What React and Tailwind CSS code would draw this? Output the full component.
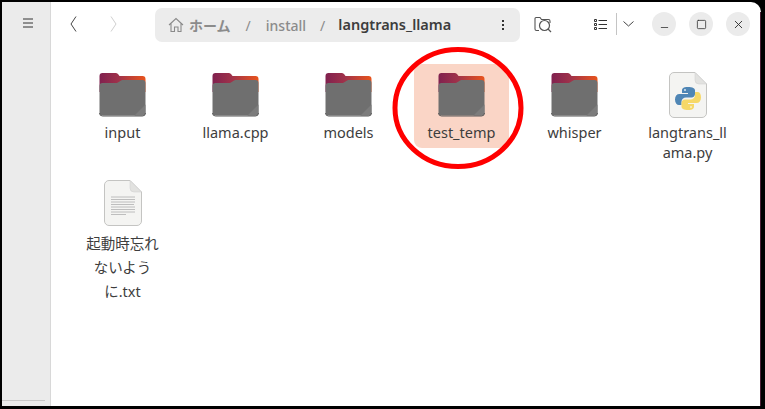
import React from 'react';
import { X, Minus, Square } from 'lucide-react';

const FONT = "font-['Noto_Sans','Noto_Sans_CJK_JP',sans-serif]";

const FolderIcon = ({ id }) => (
  <svg width="47" height="44" viewBox="2 0 46 44" className="block">
    <defs>
      <linearGradient id={`tab-${id}`} x1="0" y1="0" x2="1" y2="0">
        <stop offset="0" stopColor="#80214f" />
        <stop offset="0.42" stopColor="#a0324a" />
        <stop offset="1" stopColor="#e9541c" />
      </linearGradient>
    </defs>
    <path d="M2 3a3 3 0 0 1 3-3h13a3.500 3.500 0 0 1 2.500 1L22 3h23a3 3 0 0 1 3 3v13H2z" fill={`url(#tab-${id})`} />
    <path d="M2 13a3 3 0 0 1 3-3h13c2 0 3-.6 4-1.500S24 7 26 7h19a3 3 0 0 1 3 3v29.500a3 3 0 0 1-3 3H5a3 3 0 0 1-3-3z" fill="#6f6f6f" />
    <path d="M37 42.500l11-11v8a3 3 0 0 1-3 3z" fill="#7c7c7c" />
    <path d="M2 40a3 3 0 0 0 3 3h40a3 3 0 0 0 3-3" fill="none" stroke="#5a5a5a" strokeWidth="1" />
  </svg>
);

const PageBase = ({ children }) => (
  <svg width="38" height="46" viewBox="0 0 38 46" className="block">
    <path d="M5 .5h21L37.500 12v29a4.500 4.500 0 0 1-4.500 4.500H5A4.500 4.500 0 0 1 .5 41V5A4.500 4.500 0 0 1 5 .5z" fill="#f4f4f2" stroke="#c4c4c2" />
    <path d="M26 .5V8a4 4 0 0 0 4 4h7.500z" fill="#e2e2e0" stroke="#cfcfcd" strokeWidth="0.500" />
    {children}
  </svg>
);

const PythonIcon = () => (
  <PageBase>
    <path d="M18.500 15c-4 0-5.500 1.200-5.500 3.500V21h6v1h-8.500c-2.800 0-4.500 2-4.500 5.500s1.700 5.500 4 5.500h2.500v-3.300c0-2.500 2-4.200 4.500-4.200h5.500c2 0 3.500-1.600 3.500-3.500v-3.500c0-2-2-3.500-7.500-3.500z" fill="#4f86b5" />
    <circle cx="16" cy="18" r="0.900" fill="#e9f0f6" />
    <path d="M19.500 38c4 0 5.500-1.200 5.500-3.500V32h-6v-1h8.500c2.800 0 4.500-2 4.500-5.500S30.800 20 28.500 20H26v3.300c0 2.500-2 4.200-4.500 4.200H16c-2 0-3.500 1.600-3.500 3.500v3.500c0 2 2 3.500 7 3.500z" fill="#f6d868" />
    <circle cx="22" cy="35" r="0.900" fill="#fbf3cf" />
  </PageBase>
);

const TextIcon = () => (
  <PageBase>
    {[17, 19.5, 22, 24.5, 27, 29.5, 32, 34.5].map((y, i) => (
      <line key={y} x1="7" x2={i === 7 ? 22 : i === 3 ? 30 : 31} y1={y} y2={y} stroke="#b0b0b0" strokeWidth="0.800" />
    ))}
  </PageBase>
);

const items = [
  { name: 'input', type: 'folder' },
  { name: 'llama.cpp', type: 'folder' },
  { name: 'models', type: 'folder' },
  { name: 'test_temp', type: 'folder', selected: true },
  { name: 'whisper', type: 'folder' },
  { name: ['langtrans_ll', 'ama.py'], type: 'python' },
  { name: ['起動時忘れ', 'ないよう', 'に.txt'], type: 'text' },
];

const FileItem = ({ item, id }) => (
  <div className="flex justify-center">
    <div className={`w-[95px] rounded-[8px] flex flex-col items-center pt-[9px] pb-[6px] ${item.selected ? 'bg-[#fad5c6]' : ''}`}>
      <div className="h-[44px] flex items-center justify-center">
        {item.type === 'folder' && <FolderIcon id={id} />}
        {item.type === 'python' && <PythonIcon />}
        {item.type === 'text' && <TextIcon />}
      </div>
      <div className={`text-center text-[14.5px] leading-[20px] text-[#3d3d3d] ${item.type === 'text' ? 'mt-[6px]' : 'mt-[5px]'}`}>
        {[].concat(item.name).map((line) => (
          <div key={line} className={item.type === 'text' ? 'leading-[24px]' : ''}>{line}</div>
        ))}
      </div>
    </div>
  </div>
);

const WindowButton = ({ children }) => (
  <div className="w-[24px] h-[24px] rounded-full bg-[#ebebeb] flex items-center justify-center text-[#2e2e2e]">
    {children}
  </div>
);

export default function App() {
  return (
    <div className={`w-[765px] h-[409px] bg-black pt-[2px] pl-[2px] pr-[4px] pb-[3px] overflow-hidden ${FONT}`}>
      <div className="relative w-full h-full flex bg-white rounded-tr-[10px] overflow-hidden">
        {/* sidebar */}
        <aside className="w-[49px] shrink-0 bg-[#ebebeb] border-r border-[#d8d8d8] flex flex-col justify-between">
          <div className="pt-[15px] pl-[4px] flex justify-center">
            <svg width="12" height="12" viewBox="0 0 12 12" className="block">
              <path d="M1 2h10M1 6h10M1 10h10" stroke="#333" strokeWidth="1" fill="none" />
            </svg>
          </div>
          <div className="h-px bg-[#c8c8c8] mb-[5px] mr-[5px]" />
        </aside>

        <main className="flex-1 min-w-0">
          {/* header */}
          <header className="h-[44px] flex items-center">
            <svg width="10" height="18" viewBox="0 0 10 18" className="ml-[17px] block">
              <path d="M8 1.500L3 9l5 7.500" stroke="#444" strokeWidth="1" fill="none" />
            </svg>
            <svg width="10" height="18" viewBox="0 0 10 18" className="ml-[31px] block">
              <path d="M2 1.500L7 9l-5 7.500" stroke="#cfcfcf" strokeWidth="1" fill="none" />
            </svg>
            <div className="ml-[36px] mt-[2px] w-[365px] h-[34px] rounded-[7px] bg-[#ececec] flex items-center pl-[13px] text-[14px]">
              <svg width="16" height="16" viewBox="0 0 16 16" className="block">
                <path d="M1 8l7-6.500L15 8M3 6.500V14.500h3.500V10H10v4.500h3V6.500" stroke="#8a8a8a" strokeWidth="1.100" fill="none" />
              </svg>
              <span className="ml-[5px] font-bold text-[#8b8b8b]">ホーム</span>
              <span className="ml-[15px] text-[#8b8b8b]">/</span>
              <span className="ml-[15px] font-medium text-[#8b8b8b]">install</span>
              <span className="ml-[14px] text-[#8b8b8b]">/</span>
              <span className="ml-[13px] text-[14.5px] font-semibold text-[#3d3d3d]">langtrans_llama</span>
              <div className="ml-auto mr-[16px] flex flex-col gap-[2px]">
                <span className="w-[2px] h-[2px] bg-[#333]" />
                <span className="w-[2px] h-[2px] bg-[#333]" />
                <span className="w-[2px] h-[2px] bg-[#333]" />
              </div>
            </div>
            <svg width="18" height="17" viewBox="0 0 18 17" className="ml-[14px] block">
              <path d="M5 14.500H2.500A1.500 1.500 0 0 1 1 13V2.500A1 1 0 0 1 2 1.500h4l1.500 2h7A1.500 1.500 0 0 1 16 5v2" stroke="#555" strokeWidth="1.100" fill="none" />
              <circle cx="10.500" cy="9.500" r="5" stroke="#555" strokeWidth="1.200" fill="none" />
              <path d="M14 13l3 3" stroke="#555" strokeWidth="1.200" />
            </svg>
            <svg width="13" height="11" viewBox="0 0 13 11" className="ml-[42px] block">
              <path d="M4.500 1.500H13M4.500 5.500H13M4.500 9.500H13" stroke="#333" strokeWidth="1" />
              <path d="M.5.500h2v2h-2zM.5 4.500h2v2h-2zM.5 8.500h2v2h-2z" stroke="#333" strokeWidth="1" fill="none" />
            </svg>
            <div className="ml-[9px] w-px h-[22px] bg-[#c4c4c4]" />
            <svg width="11" height="6" viewBox="0 0 11 6" className="ml-[6px] block">
              <path d="M.5.500l5 4.500 5-4.500" stroke="#444" strokeWidth="1" fill="none" />
            </svg>
            <div className="ml-[18px] flex gap-[13px]">
              <WindowButton><Minus size={11} strokeWidth={1.7} className="translate-y-[3px]" /></WindowButton>
              <WindowButton><Square size={11} strokeWidth={1.7} /></WindowButton>
              <WindowButton><X size={13} strokeWidth={1.7} /></WindowButton>
            </div>
          </header>

          {/* file grid */}
          <div className="ml-[15px] mt-[18px] grid grid-cols-[repeat(6,113px)] gap-y-[4px] items-start">
            {items.map((item, i) => (
              <FileItem key={i} item={item} id={i} />
            ))}
          </div>
        </main>

        {/* red annotation circle */}
        <svg width="132" height="124" viewBox="0 0 132 124" className="absolute left-[390px] top-[44px] pointer-events-none">
          <ellipse cx="66" cy="62" rx="63" ry="58.500" fill="none" stroke="#ff0000" strokeWidth="5" />
        </svg>
        <div className="absolute right-0 bottom-0 top-[10px] w-px bg-[#4a1f35]" />
      </div>
    </div>
  );
}
